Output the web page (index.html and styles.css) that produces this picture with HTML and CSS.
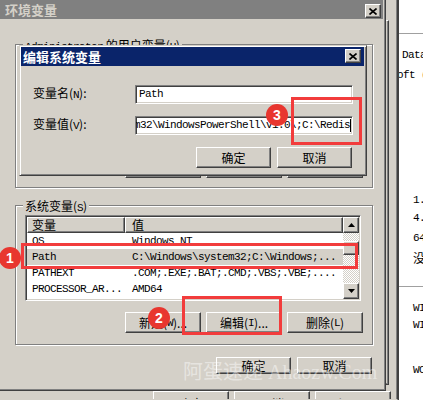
FILE: index.html
```html
<!DOCTYPE html>
<html lang="zh-CN">
<head>
<meta charset="utf-8">
<title>编辑系统变量</title>
<link rel="stylesheet" href="styles.css">
</head>
<body>
<div class="side">
  <div class="side-rule rule-a"></div>
  <div class="side-line s1 m">Data:</div>
  <div class="side-line s2 m">oft (R)</div>
  <div class="side-line s3 m">1.</div>
  <div class="side-line s4 m">4.</div>
  <div class="side-line s5 m">64</div>
  <div class="side-line s6">没</div>
  <div class="side-rule rule-b"></div>
  <div class="side-line s7 m">WI</div>
  <div class="side-line s8 m">WI</div>
  <div class="side-line s9 m">WO</div>
</div>

<div class="win-back">
  <div class="tab-page"></div>
  <div class="back-buttons">
    <div class="btn back-btn">确定</div>
    <div class="btn back-btn">取消</div>
    <div class="btn back-btn disabled">应用(<span class="m">A</span>)</div>
  </div>
</div>

<div class="win env">
  <div class="titlebar inactive">
    <span class="title">环境变量</span>
    <span class="close-btn"><svg width="8" height="7" viewBox="0 0 8 7"><path d="M0.5 0.5L7.5 6.5M7.5 0.5L0.5 6.5" stroke="#000" stroke-width="1.6"/></svg></span>
  </div>
  <div class="env-body">
    <div class="group user-group">
      <div class="group-label"><span class="m">Administrator</span> 的用户变量(<span class="m">U</span>)</div>
      <div class="btn-row">
        <div class="btn act">新建(<span class="m">N</span>)...</div>
        <div class="btn act">编辑(<span class="m">E</span>)...</div>
        <div class="btn act">删除(<span class="m">D</span>)</div>
      </div>
    </div>
    <div class="group sys-group">
      <div class="group-label">系统变量(<span class="m">S</span>)</div>
      <div class="list">
        <div class="list-main">
          <div class="list-head">
            <div class="hcell c1">变量</div>
            <div class="hcell c2">值</div>
          </div>
          <div class="list-row"><span class="cell c1 m">OS</span><span class="cell c2 m">Windows_NT</span></div>
          <div class="list-row sel"><span class="cell c1 m">Path</span><span class="cell c2 m">C:\Windows\system32;C:\Windows;...</span></div>
          <div class="list-row"><span class="cell c1 m">PATHEXT</span><span class="cell c2 m">.COM;.EXE;.BAT;.CMD;.VBS;.VBE;....</span></div>
          <div class="list-row"><span class="cell c1 m">PROCESSOR_AR...</span><span class="cell c2 m">AMD64</span></div>
        </div>
        <div class="vscroll">
          <div class="btn sbtn"><svg width="7" height="4" viewBox="0 0 7 4"><path d="M0 4L3.5 0L7 4Z" fill="#000"/></svg></div>
          <div class="track"><div class="btn thumb"></div></div>
          <div class="btn sbtn"><svg width="7" height="4" viewBox="0 0 7 4"><path d="M0 0L3.5 4L7 0Z" fill="#000"/></svg></div>
        </div>
      </div>
      <div class="btn-row">
        <div class="btn act">新建(<span class="m">W</span>)...</div>
        <div class="btn act">编辑(<span class="m">I</span>)...</div>
        <div class="btn act">删除(<span class="m">L</span>)</div>
      </div>
    </div>
    <div class="env-buttons">
      <div class="btn env-btn">确定</div>
      <div class="btn env-btn">取消</div>
    </div>
  </div>
</div>

<div class="win edit">
  <div class="titlebar active">
    <span class="title">编辑系统变量</span>
    <span class="close-btn"><svg width="8" height="7" viewBox="0 0 8 7"><path d="M0.5 0.5L7.5 6.5M7.5 0.5L0.5 6.5" stroke="#000" stroke-width="1.6"/></svg></span>
  </div>
  <div class="edit-body">
    <div class="form">
      <label class="flabel">变量名(<span class="m">N</span>):</label>
      <div class="field"><span class="m">Path</span></div>
      <label class="flabel">变量值(<span class="m">V</span>):</label>
      <div class="field scroll"><span class="m">%SystemRoot%\system32\WindowsPowerShell\v1.0\;C:\Redis</span><span class="caret"></span></div>
    </div>
    <div class="edit-buttons">
      <div class="btn act">确定</div>
      <div class="btn act">取消</div>
    </div>
  </div>
</div>

<div class="mark mark1"></div>
<div class="mark mark2"></div>
<div class="mark mark3"></div>
<div class="badge b1">1</div>
<div class="badge b2">2</div>
<div class="badge b3">3</div>
<div class="watermark">阿蛋速递 Ahaozw.Com</div>
</body>
</html>
```

FILE: styles.css
```css
* { box-sizing: border-box; margin: 0; padding: 0; }
html, body { width: 423px; height: 400px; overflow: hidden; }
body {
  position: relative;
  background: #d4d0c8;
  font-family: "Noto Sans CJK SC", "Liberation Sans", sans-serif;
  font-size: 12px;
  line-height: 14px;
  color: #000;
}
.m { font-family: "Liberation Mono", "Noto Sans CJK SC", monospace; font-size: 11px; letter-spacing: -0.6px; }

/* right background panel */
.side {
  position: absolute; left: 398px; top: 0; width: 25px; height: 400px;
  background: #fff; border-left: 1px solid #404040;
  display: flex; flex-direction: column; overflow: hidden;
  white-space: nowrap;
}
.side-rule { height: 1px; background: #a0a0a0; flex: none; }
.rule-a { margin-top: 33px; }
.rule-b { margin-top: 20px; }
.side-line { line-height: 16px; height: 16px; flex: none; padding-left: 14px; }
.s1 { margin-top: 13px; padding-left: 3px; }
.s2 { margin-top: 4px; padding-left: 0; margin-left: -2px; }
.s3 { margin-top: 109px; }
.s4 { margin-top: 2px; }
.s5 { margin-top: 4px; }
.s6 { margin-top: 4px; }
.s7 { margin-top: 13px; }
.s8 { margin-top: 1px; }
.s9 { margin-top: 29px; }

/* back window */
.win-back {
  position: absolute; left: -3px; top: -3px; width: 401px; height: 403px;
  background: #d4d0c8;
  border: 1px solid; border-color: #d4d0c8 #404040 #d4d0c8 #d4d0c8;
  box-shadow: inset -1px 0 #808080;
  padding: 0 8px 0 0;
  display: flex; flex-direction: column;
  overflow: hidden;
}
.tab-page {
  margin-top: 22px; height: 365px; flex: none;
  border: 1px solid; border-color: #fff #404040 #404040 #fff;
  box-shadow: inset -1px -1px #808080;
}
.back-buttons { display: flex; justify-content: flex-end; gap: 5px; margin-top: 6px; margin-right: -2px; }
.back-btn { width: 76px; height: 23px; align-items: flex-start; padding-top: 2px; }
.disabled { color: #808080; text-shadow: 1px 1px #fff; }

/* generic window */
.win {
  position: absolute;
  background: #d4d0c8;
  border: 1px solid; border-color: #d4d0c8 #404040 #404040 #d4d0c8;
  box-shadow: inset 1px 1px #fff, inset -1px -1px #808080;
  display: flex; flex-direction: column;
}
.titlebar { display: flex; align-items: flex-start; height: 19px; flex: none; }
.titlebar.inactive { background: #808080; color: #d4d0c8; }
.titlebar.active { background: #0a246a; color: #fff; }
.title { font-weight: bold; font-size: 13px; line-height: 19px; }
.close-btn {
  margin-left: auto; width: 16px; height: 14px;
  background: #d4d0c8;
  border: 1px solid; border-color: #fff #404040 #404040 #fff;
  box-shadow: inset -1px -1px #808080;
  display: flex; align-items: center; justify-content: center;
}
.close-btn svg { display: block; }

/* buttons */
.btn {
  background: #d4d0c8;
  border: 1px solid; border-color: #fff #404040 #404040 #fff;
  box-shadow: inset -1px -1px #808080;
  display: flex; align-items: center; justify-content: center;
  white-space: nowrap; flex: none;
}

/* env window */
.env { left: -3px; top: -3px; width: 389px; height: 394px; padding: 2px; }
.env .titlebar { padding-left: 5px; padding-right: 2px; }
.env .close-btn { margin-top: 4px; }
.env-body { padding-left: 15px; display: flex; flex-direction: column; }
.group {
  width: 358px;
  border: 1px solid #808080;
  box-shadow: inset 1px 1px #fff, 1px 1px #fff;
  display: flex; flex-direction: column;
  padding: 0 10px 11px 9px;
}
.group-label {
  align-self: flex-start;
  margin: -7px 0 0 -2px;
  padding: 0 2px;
  background: #d4d0c8;
  line-height: 14px; height: 14px;
  white-space: nowrap;
}
.user-group { margin-top: 25px; height: 144px; padding-bottom: 9px; }
.user-group .btn-row { margin-top: auto; }
.sys-group { margin-top: 17px; }
.btn-row { display: flex; justify-content: flex-end; gap: 5px; margin-right: -1px; }
.btn.act { width: 76px; height: 21px; }
.sys-group .btn-row { margin-top: 11px; }

.list {
  margin-top: 2px;
  width: 336px; height: 86px;
  border: 1px solid; border-color: #808080 #fff #fff #808080;
  box-shadow: inset 1px 1px #404040, inset -1px -1px #d4d0c8;
  background: #fff;
  padding: 1px;
  display: flex;
}
.list-main { width: 316px; overflow: hidden; }
.list-head { display: flex; height: 16px; }
.hcell {
  background: #d4d0c8;
  border: 1px solid; border-color: #fff #404040 #404040 #fff;
  box-shadow: inset -1px -1px #808080;
  line-height: 13px; height: 16px;
}
.hcell.c1 { width: 98px; padding-left: 4px; }
.hcell.c2 { width: 218px; padding-left: 6px; }
.list-row { display: flex; height: 16px; line-height: 16px; white-space: nowrap; }
.list-row.sel { background: #d4d0c8; }
.cell.c1 { width: 98px; padding-left: 5px; overflow: hidden; }
.cell.c2 { width: 218px; padding-left: 7px; overflow: hidden; }

.vscroll { width: 16px; display: flex; flex-direction: column; }
.sbtn { width: 16px; height: 16px; }
.sbtn svg { display: block; }
.track {
  flex: 1;
  background: repeating-conic-gradient(#fff 0 25%, #d4d0c8 0 50%) 0 0 / 2px 2px;
  display: flex; flex-direction: column;
}
.thumb { width: 16px; height: 14px; margin-top: 8px; }

.env-buttons { display: flex; justify-content: flex-end; gap: 6px; width: 358px; padding-right: 1px; margin-top: 12px; }
.env-btn { width: 75px; height: 17px; }

/* edit dialog */
.edit { left: 19px; top: 45px; width: 348px; height: 131px; padding: 1px; }
.edit .titlebar { padding-left: 2px; padding-right: 3px; margin-right: 1px; }
.edit .close-btn { margin-top: 2px; width: 16px; height: 14px; }
.edit-body { padding: 17px 12px 0 12px; display: flex; flex-direction: column; }
.form { display: grid; grid-template-columns: 102px 218px; row-gap: 9px; align-items: center; }
.flabel { line-height: 19px; white-space: nowrap; }
.field {
  height: 19px;
  background: #fff;
  border: 1px solid; border-color: #808080 #fff #fff #808080;
  box-shadow: inset 1px 1px #404040, inset -1px -1px #d4d0c8;
  padding: 0 3px;
  display: flex; align-items: center;
  overflow: hidden; white-space: nowrap;
}
.field.scroll { justify-content: flex-end; padding-right: 1px; }
.caret { width: 1px; height: 13px; background: #000; margin-left: 0; flex: none; }
.edit-buttons { display: flex; justify-content: flex-end; gap: 6px; margin-top: 11px; margin-right: 1px; }
.edit-buttons .btn.act { width: 75px; height: 21px; }

/* annotations */
.mark { position: absolute; border: 3px solid #f23c3c; }
.mark1 { left: 21px; top: 243px; width: 337px; height: 26px; }
.mark2 { left: 182px; top: 296px; width: 100px; height: 39px; }
.mark3 { left: 291px; top: 97px; width: 71px; height: 48px; }
.badge {
  position: absolute; width: 22px; height: 22px; border-radius: 50%;
  background: #e8362f; color: #fff;
  font-family: "Liberation Sans", sans-serif; font-weight: bold; font-size: 14px;
  line-height: 22px; text-align: center;
}
.b1 { left: -1px; top: 247px; }
.b2 { left: 148px; top: 307px; }
.b3 { left: 266px; top: 104px; }
.watermark {
  position: absolute; left: 183px; top: 360px;
  font-family: "Liberation Serif", "Noto Sans CJK SC", serif;
  font-size: 20px; line-height: 24px;
  color: rgba(255,255,255,0.45);
  white-space: nowrap;
}
```
